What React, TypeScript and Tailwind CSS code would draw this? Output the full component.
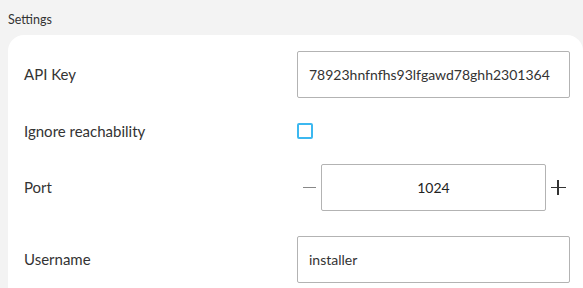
import React from "react";

function TextField({ value }: { value: string }) {
  return (
    <div className="flex h-[47px] items-center rounded-[2px] border border-[#b3b3b3] bg-white px-[11px] text-[14px] text-[#333]">
      {value}
    </div>
  );
}

function Stepper({ value }: { value: number }) {
  return (
    <div className="flex items-center">
      <button className="flex h-[47px] w-[24px] items-center justify-center">
        <span className="block h-[1.5px] w-[13px] bg-[#888]" />
      </button>
      <div className="flex h-[47px] flex-1 items-center justify-center rounded-[2px] border border-[#b3b3b3] text-[14px] text-[#222]">
        {value}
      </div>
      <button className="relative flex h-[47px] w-[24px] items-center justify-center">
        <span className="absolute h-[1.5px] w-[15px] bg-[#333]" />
        <span className="absolute h-[15px] w-[1.5px] bg-[#333]" />
      </button>
    </div>
  );
}

export default function App() {
  return (
    <div
      className="h-[288px] w-[583px] overflow-hidden bg-[#f3f3f3] text-[#333]"
      style={{ fontFamily: "Lato, 'Noto Sans', sans-serif" }}
    >
      <div className="px-2 pt-[11px] pb-[7px] text-[12.5px] leading-[17px]">Settings</div>
      <div className="ml-2 rounded-t-2xl bg-white pt-4 pl-4 pr-[13px] pb-4">
        <div className="grid grid-cols-2 gap-y-[25px] text-[15px]">
          <div className="flex items-center">API Key</div>
          <TextField value="78923hnfnfhs93lfgawd78ghh2301364" />

          <div className="flex h-4 items-center">Ignore reachability</div>
          <div className="flex h-4 items-center">
            <span className="block h-4 w-4 rounded-[2px] border-2 border-[#3cb8f0]" />
          </div>

          <div className="flex items-center">Port</div>
          <Stepper value={1024} />

          <div className="flex items-center">Username</div>
          <TextField value="installer" />
        </div>
      </div>
    </div>
  );
}
